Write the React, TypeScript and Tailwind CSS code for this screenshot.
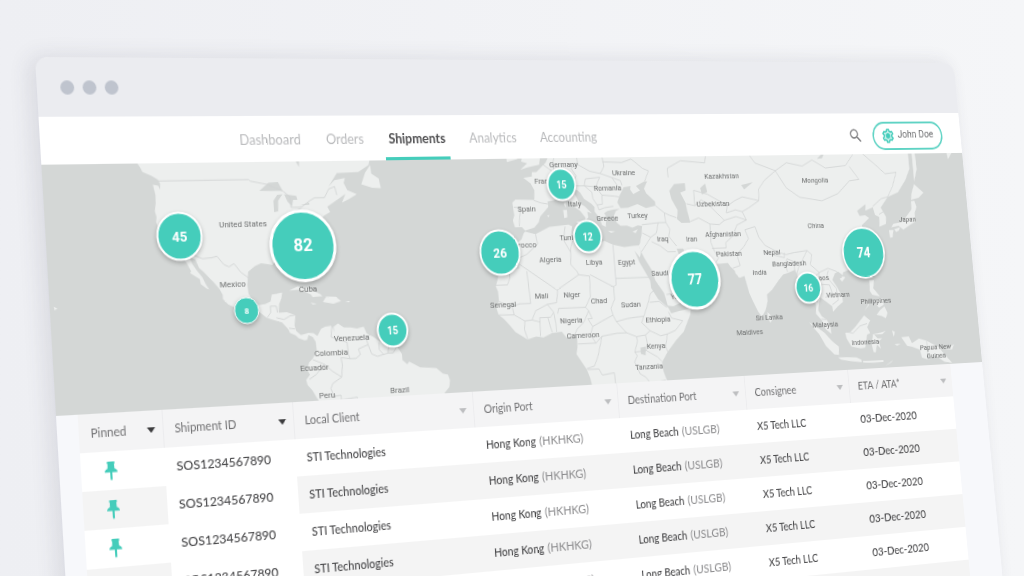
import React from "react";
import { MdSearch } from "react-icons/md";
import clsx from "clsx";

/* ---------- map projection ---------- */
const MAP_W = 1024;
const MAP_H = 223;

const project = (lon: number, lat: number) => {
  const merc = Math.log(Math.tan(Math.PI / 4 + (lat * Math.PI) / 360));
  return `${(503 + 3.2 * lon).toFixed(1)} ${(189.5 - 176 * merc).toFixed(1)}`;
};

const toPath = (pts: string, close: boolean) =>
  "M" +
  pts
    .trim()
    .split(/\s+/)
    .map(p => {
      const [lon, lat] = p.split(",").map(Number);
      return project(lon, lat);
    })
    .join("L") +
  (close ? "Z" : "");

/* ---------- geography, "lon,lat" pairs ---------- */
const LAND = [
  // Americas
  "-133,54 -130.5,54 -128,51.5 -127.5,50.8 -124.8,50 -123,49.3 -122.4,48.5 -122.5,47.3 -123,48.1 -124.6,48.3 -124,46.2 -124.1,44.5 -124.5,42.8 -124.1,41.5 -124.3,40.3 -123.7,39 -122.5,37.7 -121.9,36.6 -120.6,34.6 -118.4,34 -117.1,32.5 -116.5,31.3 -115.8,30.2 -114.7,28.2 -115,27.7 -114,27.1 -112.2,26 -112,24.7 -110.3,23.4 -109.5,23.1 -110.3,24.3 -111.4,26.5 -112.8,28.2 -114.2,30 -114.8,31.7 -113.2,31.2 -112.2,29 -110.8,27.8 -109.3,26.3 -108,25 -106.4,23.2 -105.5,21.5 -105.5,20.3 -104,18.8 -101.8,17.8 -99.5,16.7 -96.5,15.7 -94.5,16.2 -92.3,14.5 -90,13.7 -87.7,13 -87.2,12.4 -85.8,10.8 -85.4,9.8 -83.7,9 -82.8,8.1 -81,7.4 -80.2,7.5 -79.6,8.9 -78.3,8.3 -77.5,6.8 -77.3,4 -78.8,1.8 -80,.7 -80.8,-1.5 -80,-3 -81.3,-4.5 -81,-6 -79.5,-7.8 -78.3,-10 -77,-12 -77,-14 -39,-14 -39,-13 -37.2,-11 -35.2,-9 -34.8,-7 -35.3,-5.2 -37,-4.8 -39,-3 -41.5,-2.8 -44.3,-2.5 -47.8,-.6 -48.5,-1.4 -50,0 -50,1.8 -51.5,4.2 -53,5.4 -57,6 -58.8,7.4 -61,8.6 -61.8,10.7 -64,10.2 -66,10.6 -68.2,10.7 -70,12 -71.5,11 -71.3,9.4 -72,11.4 -74.2,11.2 -75.5,10.6 -76.8,8.5 -78,9.4 -79.6,9.6 -82,9 -83.4,10.3 -83.8,12 -83.3,15 -86,15.9 -88.5,15.8 -88.2,18.3 -87.4,19.8 -87,21.5 -90.3,21.1 -90.8,19.2 -92.5,18.5 -94.7,18.2 -96.3,19.5 -97.5,21.5 -97.7,24 -97.2,27.5 -95,29 -93,29.7 -91,29.4 -89.4,29.1 -89,30.3 -86,30.4 -84,30 -82.8,28 -81.8,26 -80.5,25.2 -80.1,27 -81.3,30 -80.8,32 -78,33.9 -75.7,35.3 -76.2,37.8 -74.2,39.5 -72,41 -70,41.8 -70.8,43 -67,44.7 -64.7,45.7 -66,43.8 -63.5,44.6 -61,45.6 -64,46.5 -65,48 -64.5,49 -68,48.6 -70,47.3 -67,50 -60,50.2 -56.5,51.5 -55.8,53 -57,54",
  "-59.3,47.7 -55.8,46.9 -53,46.8 -53.5,48.8 -55.8,49.8 -56,51.5 -57.8,50",
  "-84.8,22 -82,23.1 -79,22.6 -75,20.7 -74.3,20.1 -77.5,19.9 -78,20.7 -81.5,22.2",
  "-74.3,18.4 -73.2,19.9 -70,19.7 -68.5,18.5 -71,17.8",
  "-78.3,18.3 -76.3,18 -77.5,17.8",
  "-67.2,18.4 -65.7,18.4 -66,18",
  "-156,20 -155,19.5 -155.8,19",
  // Europe + Asia
  "8.5,54 8.3,53.6 4.8,53 3.5,51.5 1.6,50.5 0,49.6 -1.6,49.6 -1.7,48.7 -4.7,48.4 -2.3,47.2 -1.2,45.7 -1.5,43.5 -8,43.7 -9.2,43 -8.8,40 -9.4,38.8 -8.9,37 -6.5,37 -5.5,36.1 -2.2,36.8 -.5,38.2 .1,39.5 3.2,41.8 3.1,43.1 5,43.3 7.5,43.8 9,44.4 10.3,43.3 12.2,41.8 14.3,40.7 16,39 15.7,38 17,39 16.8,40.4 18.4,40 16,41.8 14.1,42.5 13.5,43.7 12.3,45.2 13.7,45.6 14.8,45 16,43.5 18.5,42.3 19.5,41.5 19.4,40.4 21,38.8 21.7,37 23,36.5 23.2,38 24,38.2 22.8,40 24,40.5 26,40.8 28.9,41 27.8,42.5 28.7,44 30.5,46 33,46.2 32.8,45.4 33.8,44.4 36.3,45.2 35,46.2 38.2,47.2 39.2,47.2 37.8,45.6 38.5,44.5 41.5,42.5 41.5,41.5 38,41 35,42 31.5,41.2 29,41.1 27,40.4 26.2,39.3 27,37.5 28.3,36.7 30.6,36.7 32.5,36.1 34.5,36.7 36,36.5 35.7,34.5 34.8,32 34.3,31.2 34.9,29.5 36,27.5 38.3,24 39.2,21 42,17 43,13 45,12.8 48.5,14 52,15.7 55,17.5 57.8,19 59.8,22.5 58.5,23.7 56.5,25 56.3,26.2 54,24.2 51.5,24.2 51.3,26 50,26.2 48.7,28.2 48,30 50.3,30 51.5,27.8 54.5,26.6 57,27 58.5,25.6 61.6,25.2 66.5,25.4 67.3,24.3 68.8,23 69,22.2 70.4,20.8 72.3,21.3 72.8,19 73.5,16 74.8,13 76.3,9.8 77.5,8.1 78.2,8.9 79.2,10.3 80.2,13 80.2,15.2 82.3,16.7 85,19.5 87,21.3 89,21.8 91.5,22.6 92.5,20.5 94.3,18.5 94.3,16 97,17 98,14 98.6,11 98.3,8.3 100.3,6 101.5,3 103.6,1.4 103.4,4 102.2,6.2 100.5,7.3 99.3,9.3 99.8,12 100.6,13.5 102.5,12.2 104.8,10.5 105,8.7 107,10.4 109.2,11.8 109.1,13.5 107.5,16.5 105.8,19 107,21 108.3,21.6 110,20.4 110.3,21.3 113.5,22.2 117,23.5 119.5,25.8 121.7,28.5 121.8,31 120,33.5 119.3,35 122.5,37 121,37.8 118.8,37.6 118,39 121.5,40.7 121.3,39 124.3,39.8 125,37.8 126.6,37.2 126.3,34.5 129,35.2 129.3,37.2 127.5,39.7 130.7,42.4 135,43.5 138.5,46.5 140.5,49 140.5,52 140.5,54",
  "-5.5,50.1 -3,50.6 1.2,51.1 1.7,52.7 0,54 -3,54 -4.5,53 -5,51.8 -3,51.4",
  "-10,51.7 -6.3,52.3 -6,54 -10,54",
  "12.5,38 15.5,38.2 15.1,36.7",
  "8.3,41 9.7,41 9.6,39.2 8.5,39",
  "8.7,42.4 9.4,43 9.4,41.5",
  "23.6,35.5 26.2,35.2 24.7,34.9",
  "32.4,35 34.4,35.6 33.5,34.6",
  "2.5,39.6 3.3,39.9 3.1,39.3",
  // Africa
  "-5.5,35.8 -2,35.1 3,36.9 9.8,37.3 11,36.9 10.5,34.5 11,33.4 15.3,32.3 16,31.3 19,30.3 20,32 22,32.8 25,31.7 29,30.9 32.3,31.2 34.3,31.3 34.9,29.5 34.3,27.9 32.6,29.9 34,26.5 35.7,23.8 37.3,21 37.5,18.7 39.7,15.2 43.2,12.3 44,10.5 47,11.2 51.2,11.9 51,10 48,4.5 45,1.9 41.5,-1.8 39.2,-5 39.5,-8 40.5,-11 40.5,-14 13,-14 13.6,-11 13.2,-8.8 12.2,-6 9,-1 9.5,1 9.7,4 8.5,4.6 6,4.4 4.5,6.3 1,6 -2,4.8 -4.5,5.2 -7.6,4.4 -11.5,6.9 -13.2,9 -15,11 -16.8,12.5 -17.4,14.7 -16.3,16.5 -16.4,19.5 -17,21 -15.9,23.8 -14.5,26.2 -12.9,27.9 -11,28.8 -9.7,30.5 -9.3,32.5 -7,33.8 -6,35.5",
  // Pacific islands
  "156,54 156.7,51 158.5,52.5 160,54",
  "142,54 142,50 142,46 143.5,49 143.3,52 143,54",
  "140,41.5 140.5,43.3 141.8,45.4 145.3,43.3 143.2,42",
  "140,41.2 139.8,39 137.3,37 135.5,35.6 132,35.2 131,34.2 134,34.6 135.8,33.5 138.5,34.7 140.8,35.6 141,38 142,39.7 141.3,41.3",
  "130,33.5 131.8,33.5 131.2,31.4 130.2,31.2",
  "132.2,33.7 134.5,34.2 134,33.3 132.8,32.9",
  "121,25 121.9,25 120.9,22 120.1,23",
  "108.7,19.3 110,20 111,19.7 109.6,18.3",
  "120.3,18.4 122.2,18.4 121.6,15.8 124,13 121,13.7 120.2,15",
  "122,7 123.5,8.5 125.4,9.7 126.4,7.5 125.5,5.7 124,6.5",
  "122,11.8 124.9,12.3 125.2,10.3 123.2,9.3 122,10.5",
  "117.3,8.5 119.4,11 119.3,10.4",
  "109,1.5 111,1.6 113,3.2 117,7 119.2,5.2 117.8,3 118.8,1 117.5,.5 116.3,-3.8 114.5,-4 111,-3.3 109.3,-.5",
  "95.3,5.6 98,4 101,1.8 103.5,-1 106,-3 105.8,-5.8 104,-5.5 101,-2.5 98.8,1.5",
  "105.3,-6.6 108.5,-6.7 112.5,-6.9 114.4,-7.8 114.4,-8.6 110,-8 106.5,-7.4",
  "115,-8.2 119,-8.3 123,-8.3 123,-8.9 119,-9 115,-8.8",
  "123.5,-10.3 127,-8.4 126,-9.2",
  "119.8,.5 123,1 125,1.5 123.5,.4 120.3,.4 121.5,-1 123.3,-1 121.8,-2 122.5,-4.5 121,-3 120.3,-5.5 119.5,-5.5 119,-3",
  "127.5,1.5 128.6,1 128,-.7",
  "128,-3.2 130.5,-3.1 129,-3.7",
  "131,-1 134,-.8 135,-3.2 138,-1.7 141,-2.6 145.8,-5 147,-6.7 150.5,-10.5 147.5,-10 144,-7.7 141,-9 138.5,-8.2 138,-5.5 135,-4.4 133,-4 132,-2.5",
  "148.5,-5.8 152,-4.3 151,-6",
  "79.8,9.6 81.8,7.5 80.5,6 79.8,7.5",
];

const LAKES = [
  "-92,46.7 -89,48.3 -86,48.4 -84.7,46.6 -87.5,46.6",
  "-87.8,42 -87.8,44.5 -86.5,45.8 -84.8,45.9 -86.3,44.5 -86.5,42.2",
  "-84.3,45.9 -80.5,45.5 -80.2,44.6 -81.6,44.6 -82,43.2 -83.3,44.2",
  "-83.2,41.8 -80,42.6 -79,42.8 -81.5,41.6",
  "-79.6,43.4 -76.5,44 -76.5,43.5",
  "-80,52.5 -79,51.3 -78.8,52.5",
  "47,45 49,46.5 53,46.7 53,45 51,44.5 52.7,42 53,40 53.8,37 50.5,37 49,38 49.5,40.3 47.6,43",
  "58.5,45.5 60.5,46.5 61,44.5 59,44",
  "31.8,0 33.8,.3 33.5,-2.5 31.8,-2",
  "104,51.5 108,53.5 106,51.6",
  "74,46 78.5,46.6 75,45",
];

const BORDERS = [
  "-123,49 -95.2,49 -94.6,48.7 -89.5,48 -84.5,46.5 -82.5,45.3 -82.4,43 -79,43 -76.5,44.3 -74.7,45 -71.5,45 -70,46.8 -68,47.3 -67.5,45.5",
  "-117.1,32.5 -114.7,32.7 -111,31.3 -108.2,31.5 -106.5,31.8 -104.5,29.6 -103,29 -101.4,29.8 -99.5,27.5 -97.2,25.9",
  "-92.2,14.5 -91,16 -91,17.8 -89.2,17.8 -88.9,15.9",
  "-89.3,14.4 -87,13.8 -85,14.8 -83.2,15",
  "-85.6,11.2 -83.7,10.9",
  "-72,11.5 -72.5,8 -70,7 -67.5,6.2 -67.3,2.5 -66.9,1.2 -69.8,1.7 -69.5,-.5 -70,-4.2 -72.8,-2.3 -75.2,-.1 -78.8,1.5",
  "-75.2,-.1 -78,-3 -80.3,-4.4",
  "-70,-4.2 -73,-6 -73.7,-7.5 -72.8,-9.8 -70.6,-9.6 -70.6,-11 -69,-12.5",
  "-66.9,1.2 -65,1.2 -63.5,2.3 -64,4 -60.8,5.2 -61.2,6.8 -60,8.3",
  "-60.8,5.2 -59.8,2.3 -58,1.5 -56,2 -54.5,2.3 -52.8,2.3 -51.7,4",
  "-57.2,5.8 -57.3,3.5 -56,2",
  "-54,5.6 -54.3,3.5 -54.5,2.3",
  "-70.6,-11 -65.5,-10.5 -65,-13",
  // Europe
  "-1.7,43.4 .7,42.8 3.1,42.5",
  "-8.8,41.9 -6.5,41.8 -7,39.5 -7.4,37.2",
  "2.5,51.1 6,49.5 8,49 7.5,47.5 6,46.3 7,45.5 7.5,43.8",
  "7.5,47.5 10,47.3 13,47.5 13.5,46.5 10.5,46.8 8.5,46.2 7,45.5",
  "6.9,53 6,51.5 6.2,50 8,49",
  "14.3,53.8 14.8,51 12.2,50.3 13.8,48.7 13,47.5",
  "14.8,51 18.8,49.6 22.5,49.1 24,50.5 23.6,52.5 23.8,54",
  "13.5,46.5 16.5,46.5 17,48 22.2,48.3 20.5,46.2 16.5,46.5",
  "22.5,49.1 26.5,48.2 28.2,46.5 28.2,45.5",
  "20.5,46.2 22.5,44.3 27,44 28.5,43.8",
  "16.5,46.5 19,45 19.2,43.5 20.5,42 22.4,42.2 22.5,44.3",
  "20.5,42 21,40.8 23,41.3 26.3,41.6",
  "23.6,51.5 30.5,51.3 34,52 38,50 40,49.5 38.3,47.3",
  "26.5,48.2 29.5,47.5 30,46.4",
  // Africa
  "-2,35.1 -1.5,32.5 -5.5,29.8 -8.7,28.7 -8.7,27.5 -8.7,27.3 4,19.2 12,23.5 11.5,24.5 9.5,26.5 9.8,30 7.7,33.3 8.5,36.9",
  "-13,27.7 -8.7,27.6 -8.7,26 -12,26 -12,23.3 -13,21.3 -17,21.3",
  "-6,25 -5.5,15.5 -9.3,15.5 -12,14.8 -16.3,16.4",
  "-12,14.8 -11.5,12.2 -16.7,12.4",
  "-11.5,12.2 -8,10.2 -8.3,7.6 -7.5,4.5",
  "-8,10.2 -5.5,10.4 -2.8,9.7 -3,5.2",
  "-5.5,10.4 -4,13.2 .2,15 3.5,15.4 4.2,19.2",
  ".2,15 2.2,12.5 1,11 -2.8,11 -2.8,9.7",
  "0,11 1.2,6.2",
  "2.2,12.3 2.7,9 2.7,6.4",
  "3.6,12 4,13.6 13.5,13.6 15.5,16.8 15.8,23 12,23.5",
  "13.5,13.6 14.5,12.5 12.5,9 10,7 8.7,4.8",
  "14.5,12.5 15.5,10 14,10 15.5,7.5 18.8,9 23,10.8 24,8.7 27.3,5 30.8,3.6",
  "16,23.4 24,19.5 24,15.7 22.5,13 23,10.8",
  "24,19.5 25,20 25,31.6",
  "25,22 36.8,22",
  "11,33.2 10,31.5 9.8,30",
  "24,8.7 28,9.5 31,9.8 34,10 36,14.3 37,17 38.5,18",
  "36.5,14.3 40,14.5 42.5,12.5",
  "34,10 33,8 35.8,5.3 39.5,3.5 42,4 45,5 48,8 44,9 43,11",
  "42,4 41,0 41.5,-1.7",
  "35.8,5.3 34,4 30.8,3.6 31,2.2 29.7,-1.3 30.5,-2.5 29.3,-4.5 31,-8.3 33,-9.5 34.5,-11.5",
  "34,4 34.5,1 33.9,-1 37.7,-3.2 39.2,-4.7",
  "33.9,-1 29.7,-1.3",
  "15.5,7.5 14.5,5 16.2,2.2 13.2,2.2 9.8,2.2",
  "16.2,2.2 18.5,4.3 24,5 27.3,5",
  "18.5,4.3 16.5,-2 15,-5 12.2,-5.8",
  "12.5,-6 16.5,-6 17.5,-8 21.8,-7.5 22,-11 24,-11",
  "34.5,-11.5 40,-10.7",
  // Middle East + Asia
  "36,36.8 42,37.2 44.8,37.2 44.5,39.7 41.5,41.5",
  "36,34.6 38.8,33.4 41,34.5 42,37.2",
  "38.8,33.4 37,31.5 35,29.4",
  "39,32.2 42,31 44.7,29.2 47.5,29.2",
  "44.8,37.2 46,35.5 45.5,33.5 48,30.8",
  "42.8,16.5 47,17 52,19 55,20 55.2,22.8 51.5,24.2",
  "52,19 53,16.7",
  "48.8,38.4 46.5,39 44.5,39.7",
  "53.8,37.3 57,38.2 61,36.5 61,34.5 60.8,31.5 61.8,29 63.2,27 61.6,25.2",
  "61,36.5 64.5,36.3 66.5,37.4 71,38.3 74.8,37.3 71,36 69.5,33.3 66.3,31.3 66.3,29.8 61,29.8",
  "53,41.8 56,41.3 58.5,42.7 61.5,41.2 66.5,37.4",
  "56,41.3 56,45 61,44 66,42 68,41 71,42.3 74,43.2 80.2,42.2 80.5,45 83,47 87.5,49.1",
  "68,41 67.5,39.3 71,40 73.5,39.5 74.8,37.3",
  "73.5,39.5 76,40.4 80.2,42.2",
  "47,48 47,50 52,51.5 61,51 62,54",
  "71,54 77,53.3 80,50.8 87.5,49.1 92,50.8 98,50 102,51.3 107,49.5 115,50 120,53.5",
  "87.5,49.1 91,45.2 96,42.8 104.5,41.8 111,43.5 116,46.5 119.8,46.8 116.5,49.8",
  "120,53.5 127,50 130.5,48 135,48.3 133,45 130.7,42.4",
  "124.3,40 128,42 130.7,42.4",
  "126.6,37.9 128.4,38.6",
  "68.2,23.8 71,24.5 70,27.8 73,30 75,32.3 74,34.7 77.8,35.5 79,32.5 81,30.2 86,28 88.8,27.3 92,27.8 97,28.3",
  "80.2,28.7 84,27.3 88,26.4 88.2,27.8",
  "88.8,22 88.2,24.5 89,26 92,25 91.5,23 92.3,21",
  "97,28.3 94.5,25 93,23 92.3,21",
  "97,28.3 98.7,27 97.8,24 101,21.5 98,19.5 98.5,16.5 99.2,12",
  "101,21.5 104.5,22.7 107.8,21.6",
  "101,21.5 100.5,19.5 101.3,17.7 104.5,17.5 105.5,14.5 102.5,13.5",
  "104.5,22 103.8,20 107,16.3 107.5,12.5 105,11",
  "100.2,6.4 102,6.2",
  "109.7,1.8 112,1.2 115,3.5 117.8,4.2",
  "141,-2.6 141,-9",
];

const LABELS: [string, number, number][] = [
  ["United States", 190, 57], ["Mexico", 176, 112], ["Cuba", 251, 119],
  ["Venezuela", 292, 166], ["Colombia", 270, 179], ["Ecuador", 252, 192],
  ["Peru", 263, 218], ["Brazil", 338, 217],
  ["Germany", 534, 6], ["France", 512, 22], ["Spain", 489, 49], ["Italy", 543, 45],
  ["Ukraine", 602, 15], ["Romania", 582, 30], ["Greece", 579, 60], ["Turkey", 614, 58],
  ["Morocco", 481, 84], ["Tunisia", 536, 78], ["Algeria", 511, 99], ["Libya", 560, 103],
  ["Egypt", 597, 104], ["Senegal", 455, 141], ["Mali", 498, 134], ["Niger", 532, 134],
  ["Chad", 562, 141], ["Sudan", 598, 146], ["Nigeria", 529, 159], ["Cameroon", 541, 174],
  ["Ethiopia", 628, 162], ["Kenya", 623, 188], ["Tanzania", 613, 208],
  ["Iraq", 641, 82], ["Iran", 675, 83], ["Saudi Arabia", 647, 116], ["Yemen", 657, 140],
  ["Kazakhstan", 717, 20], ["Uzbekistan", 704, 48], ["Afghanistan", 713, 79],
  ["Pakistan", 718, 99], ["Nepal", 770, 99], ["Bangladesh", 790, 111], ["India", 753, 119],
  ["Mongolia", 831, 26], ["China", 827, 73], ["Japan", 944, 69], ["Laos", 829, 127],
  ["Vietnam", 847, 145], ["Philippines", 894, 153], ["Sri Lanka", 760, 165],
  ["Maldives", 735, 179], ["Malaysia", 828, 175], ["Indonesia", 876, 195],
  ["Papua New", 965, 204], ["Guinea", 965, 213],
];

/* ---------- clusters ---------- */
const SIZES = {
  xs: "size-[25px] border text-[8px]",
  sm: "size-[33px] border-2 text-[10px]",
  md: "size-[45px] border-2 text-[13px]",
  lg: "size-[54px] border-2 text-[15px]",
  xl: "size-[61px] border-[3px] text-[15px]",
  xxl: "size-[68px] border-[3px] text-[17px]",
};

const CLUSTERS: { count: number; x: number; y: number; size: keyof typeof SIZES }[] = [
  { count: 45, x: 127, y: 67, size: "md" },
  { count: 82, x: 249, y: 79, size: "xxl" },
  { count: 8, x: 188, y: 137, size: "xs" },
  { count: 15, x: 335, y: 161, size: "sm" },
  { count: 26, x: 456, y: 91, size: "md" },
  { count: 15, x: 530, y: 26, size: "sm" },
  { count: 12, x: 555, y: 78, size: "sm" },
  { count: 77, x: 675, y: 124, size: "xl" },
  { count: 16, x: 811, y: 137, size: "sm" },
  { count: 74, x: 884, y: 103, size: "lg" },
];

function ShipmentMap() {
  return (
    <section aria-label="Shipment map" className="relative overflow-hidden bg-[#d4d7d6]">
      <svg viewBox={`0 0 ${MAP_W} ${MAP_H}`} className="block w-full">
        <g fill="#edefee">
          {LAND.map((p, i) => <path key={i} d={toPath(p, true)} />)}
        </g>
        <g fill="#d4d7d6">
          {LAKES.map((p, i) => <path key={i} d={toPath(p, true)} />)}
        </g>
        <g fill="none" stroke="#d0d3d3" strokeWidth="0.8" strokeLinejoin="round">
          {BORDERS.map((p, i) => <path key={i} d={toPath(p, false)} />)}
        </g>
        <g className="fill-[#6f7171] font-[Roboto,sans-serif] text-[8px]" textAnchor="middle">
          {LABELS.map(([name, x, y]) => <text key={name} x={x} y={y + 3}>{name}</text>)}
        </g>
      </svg>
      {CLUSTERS.map(c => (
        <button
          key={`${c.x}-${c.y}`}
          aria-label={`${c.count} shipments`}
          className={clsx(
            "absolute flex -translate-x-1/2 -translate-y-1/2 items-center justify-center rounded-full border-white bg-[#45cdbb] font-[Roboto,sans-serif] font-bold text-white shadow-[0_2px_4px_rgba(0,0,0,0.25)]",
            SIZES[c.size]
          )}
          style={{ left: `${(c.x / MAP_W) * 100}%`, top: `${(c.y / MAP_H) * 100}%` }}
        >
          {c.count}
        </button>
      ))}
    </section>
  );
}

/* ---------- navigation ---------- */
const TABS = ["Dashboard", "Orders", "Shipments", "Analytics", "Accounting"];

function GearIcon() {
  return (
    <svg viewBox="0 0 20 20" className="size-4" fill="none" stroke="#45cdbb" aria-hidden="true">
      <path
        d="M8.3 1.6h3.4l.6 2.4 1.5.9 2.4-.8 1.7 3-1.8 1.7v2.4l1.8 1.7-1.7 3-2.4-.8-1.5.9-.6 2.4H8.3L7.7 16l-1.5-.9-2.4.8-1.7-3 1.8-1.7V8.8L2.1 7.1l1.7-3 2.4.8L7.7 4z"
        strokeWidth="2"
        strokeLinejoin="round"
        fill="#c5efe9"
      />
      <circle cx="10" cy="10" r="3" fill="#45cdbb" strokeWidth="1" />
    </svg>
  );
}

function NavBar() {
  return (
    <header className="flex h-[43px] items-stretch bg-white pr-6 pl-[188px]">
      <nav className="flex flex-1 gap-[18px]">
        {TABS.map(tab => (
          <a
            key={tab}
            href={`#${tab.toLowerCase()}`}
            className={clsx(
              "flex items-center border-b-3 px-1 pt-1.5 text-[13px]",
              tab === "Shipments"
                ? "border-[#45cdbb] font-bold text-[#505052]"
                : "border-transparent text-[#b9babc]"
            )}
          >
            {tab}
          </a>
        ))}
      </nav>
      <div className="flex items-center gap-3 pt-1">
        <button aria-label="Search" className="text-[#7d7d7f]">
          <MdSearch size={19} />
        </button>
        <button className="flex h-[30px] items-center gap-1 rounded-full border-2 border-[#5fd3c4] px-2.5 font-[Roboto,sans-serif] text-[11px] text-[#6c6d6f]">
          <GearIcon />
          John Doe
        </button>
      </div>
    </header>
  );
}

/* ---------- table ---------- */
const COLUMNS = [
  { title: "Pinned", width: "w-[79px]", dark: true },
  { title: "Shipment ID", width: "w-[128px]", dark: true },
  { title: "Local Client", width: "w-[187px]", dark: false },
  { title: "Origin Port", width: "w-[160px]", dark: false },
  { title: "Destination Port", width: "w-[149px]", dark: false },
  { title: "Consignee", width: "w-[127px]", dark: false },
  { title: "ETA / ATA*", width: "w-[132px]", dark: false },
];

const ROWS = Array.from({ length: 6 }, () => ({
  id: "SOS1234567890",
  client: "STI Technologies",
  origin: ["Hong Kong", "HKHKG"],
  destination: ["Long Beach", "USLGB"],
  consignee: "X5 Tech LLC",
  eta: "03-Dec-2020",
}));

function PinIcon() {
  return (
    <svg viewBox="0 0 12 17" className="ml-[11px] h-[17px] w-3" fill="#45cdbb" role="img" aria-label="Pinned">
      <path d="M2.5 0h7v2l-.5.4.3 3.900C11 7 12 8 12 9.600H7v5.600L6 17l-1-1.800V9.600H0C0 8 1 7 2.700 6.300L3 2.400 2.500 2z" />
    </svg>
  );
}

function Port({ value }: { value: string[] }) {
  return (
    <>
      {value[0]} <span className="ml-px text-[12px] font-normal text-[#8c8c8e]">({value[1]})</span>
    </>
  );
}

function ShipmentTable() {
  return (
    <div className="bg-[#f7f8fb] pr-[43px] pl-5">
      <table className="w-full table-fixed border-collapse text-left text-[12px] text-[#48484a]">
        <thead>
          <tr className="h-[34px] bg-[#f4f4f5] text-[11px] text-[#717173]">
            {COLUMNS.map(c => (
              <th key={c.title} className={clsx("border-r border-[#ececee] px-[11px] py-0 font-normal last:border-r-0", c.width)}>
                <div className="flex items-center justify-between">
                  {c.title}
                  <svg
                    viewBox="0 0 8 5"
                    className={clsx("-mr-1 h-[5px] w-2 shrink-0", c.dark ? "fill-[#3c3c3e]" : "fill-[#bdbec0]")}
                    aria-hidden="true"
                  >
                    <path d="M0 0h8L4 5z" />
                  </svg>
                </div>
              </th>
            ))}
          </tr>
        </thead>
        <tbody className="font-medium">
          {ROWS.map((r, i) => (
            <tr key={i} className="h-[34px] bg-white even:bg-[#f4f4f4]">
              <td className="px-[11px] py-0"><PinIcon /></td>
              <td className="bg-white px-[11px] py-0">{r.id}</td>
              <td className="px-[11px] py-0 text-[11px]">{r.client}</td>
              <td className="px-[11px] py-0 text-[11px]"><Port value={r.origin} /></td>
              <td className="px-[11px] py-0 text-[11px]"><Port value={r.destination} /></td>
              <td className="px-[11px] py-0 text-[11px]">{r.consignee}</td>
              <td className="px-[11px] py-0">{r.eta}</td>
            </tr>
          ))}
        </tbody>
      </table>
    </div>
  );
}

export default function App() {
  return (
    <main className="h-screen overflow-hidden bg-linear-to-r from-[#eeeff3] to-[#f5f6f8] font-[Lato,sans-serif]">
      {/* browser window seen at an angle */}
      <div className="w-full origin-top-left rounded-t-xl shadow-[-6px_0_20px_rgba(60,60,80,0.12)] [transform:matrix3d(1.08145,0.018047,0,0.00019346,0.0631,1.10344,0,-0.0000444,0,0,1,0,35,57,0,1)]">
        <div className="flex h-[54px] items-center gap-2 rounded-t-xl bg-[#ebecf0] px-[22px]">
          <span className="size-[13px] rounded-full bg-[#bfc4ce]" />
          <span className="size-[13px] rounded-full bg-[#bfc4ce]" />
          <span className="size-[13px] rounded-full bg-[#bfc4ce]" />
        </div>
        <NavBar />
        <ShipmentMap />
        <ShipmentTable />
      </div>
    </main>
  );
}
